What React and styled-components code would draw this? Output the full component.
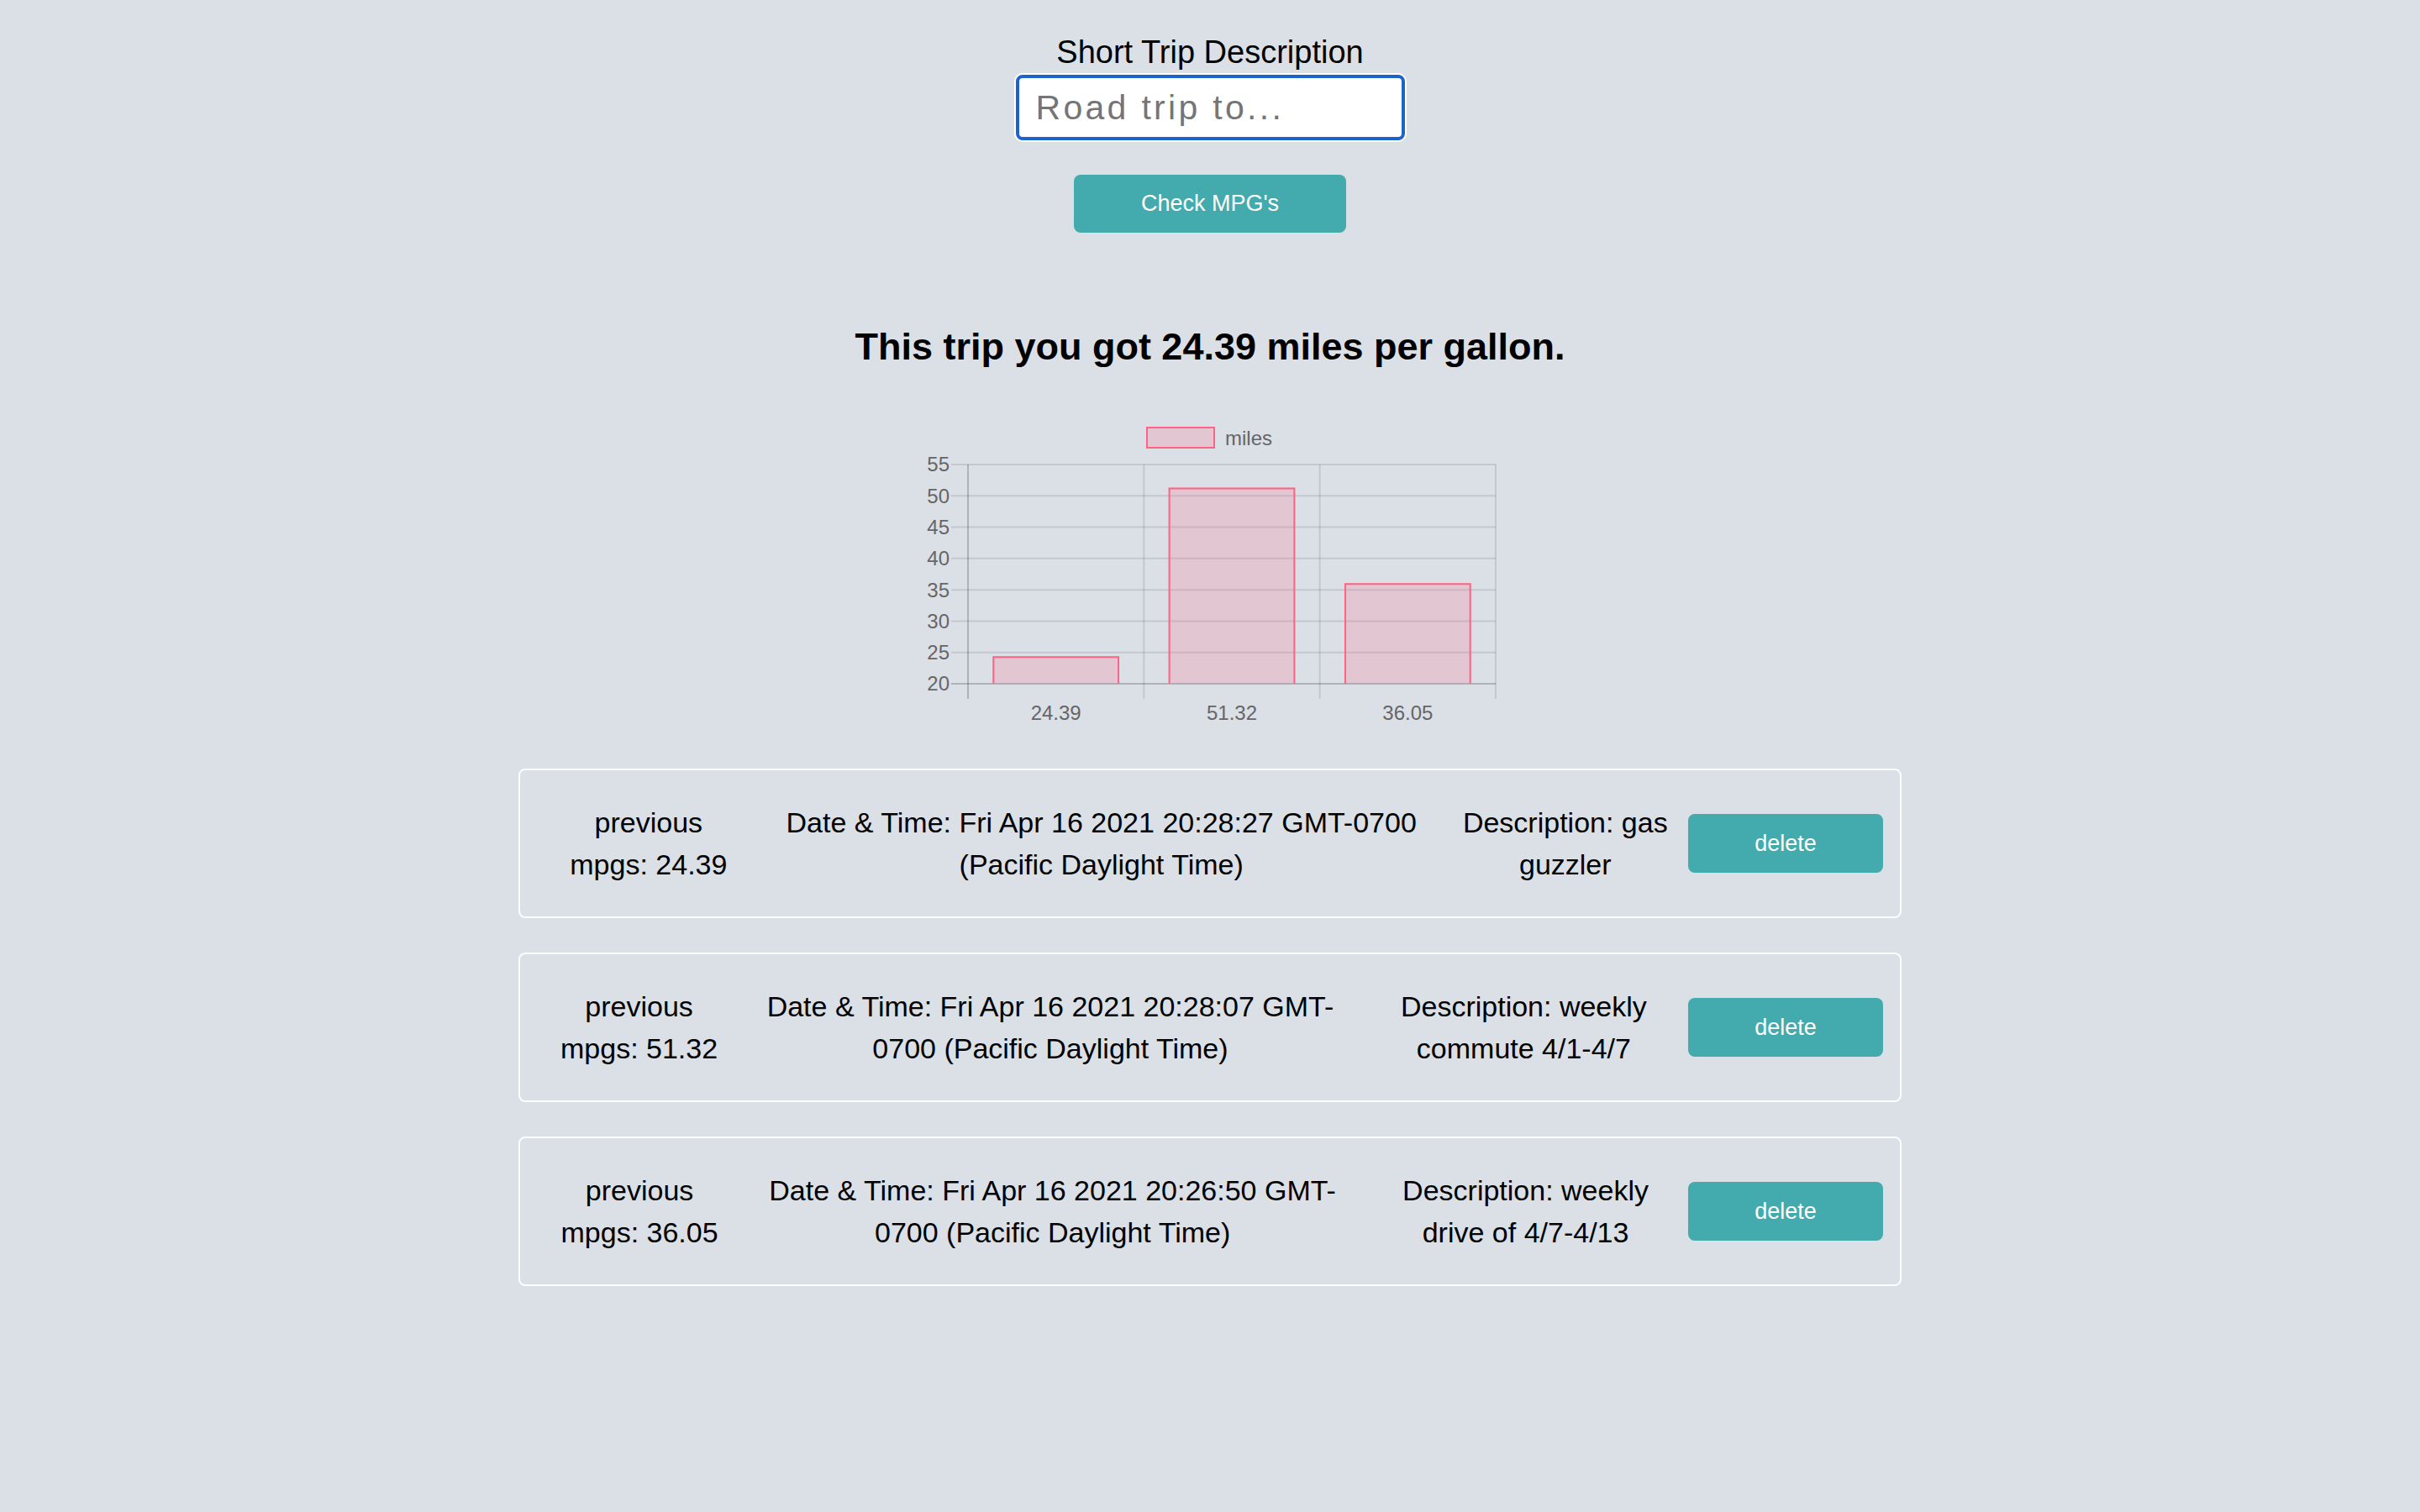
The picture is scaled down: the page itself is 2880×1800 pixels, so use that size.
import React from 'react';
import styled, { createGlobalStyle } from 'styled-components';

const GlobalStyle = createGlobalStyle`
  body {
    margin: 0;
    background: #dbdfe6;
    color: #000;
    font-family: "Liberation Sans", Arial, Helvetica, sans-serif;
  }
`;

const Page = styled.main`
  display: flex;
  flex-direction: column;
  align-items: center;
  min-height: 100vh;
  box-sizing: border-box;
  padding: 40px 0 120px;
`;

const Label = styled.label`
  font-size: 38px;
  line-height: 44px;
`;

const TripInput = styled.input`
  margin-top: 5px;
  width: 463px;
  height: 78px;
  box-sizing: border-box;
  padding: 0 20px;
  border: 4px solid #1a64cc;
  border-radius: 8px;
  box-shadow: 0 0 0 2px #fff;
  outline: none;
  background: #fff;
  font-family: inherit;
  font-size: 41px;
  letter-spacing: 3.3px;

  &::placeholder {
    color: #757575;
  }
`;

const TealButton = styled.button`
  border: none;
  border-radius: 8px;
  background: #43abad;
  color: #fff;
  font-family: inherit;
  font-size: 27px;
  cursor: pointer;
`;

const CheckButton = styled(TealButton)`
  margin-top: 41px;
  width: 324px;
  height: 69px;
`;

const Result = styled.h2`
  margin: 110px 0 0;
  font-size: 45px;
  line-height: 52px;
  font-weight: bold;
`;

const ChartSvg = styled.svg`
  display: block;
  margin-top: 50px;

  text {
    font-family: "Liberation Sans", Arial, Helvetica, sans-serif;
    font-size: 24px;
    fill: #666;
  }
`;

const History = styled.section`
  display: flex;
  flex-direction: column;
  gap: 41px;
  margin-top: 26px;
`;

const Card = styled.div`
  display: flex;
  align-items: center;
  width: 1646px;
  box-sizing: border-box;
  padding: 20px;
  border: 2px solid #fcfdfd;
  border-radius: 8px;
`;

const Cell = styled.div`
  padding: 17px 18px;
  text-align: center;
  font-size: 34px;
  line-height: 50px;
`;

const DeleteButton = styled(TealButton)`
  flex-shrink: 0;
  width: 232px;
  height: 70px;
`;

const trips = [
  { mpg: '24.39', date: 'Fri Apr 16 2021 20:28:27 GMT-0700 (Pacific Daylight Time)', desc: 'gas guzzler' },
  { mpg: '51.32', date: 'Fri Apr 16 2021 20:28:07 GMT-0700 (Pacific Daylight Time)', desc: 'weekly commute 4/1-4/7' },
  { mpg: '36.05', date: 'Fri Apr 16 2021 20:26:50 GMT-0700 (Pacific Daylight Time)', desc: 'weekly drive of 4/7-4/13' },
];

// plot area, in svg units
const plot = { left: 112, right: 740, top: 64, bottom: 325, min: 20, max: 55 };
const pink = 'rgb(255, 99, 132)';
const pinkFill = 'rgba(255, 99, 132, 0.2)';
const grid = 'rgba(0, 0, 0, 0.1)';
const axis = 'rgba(0, 0, 0, 0.2)';

const yOf = (v) => plot.top + ((plot.max - v) / (plot.max - plot.min)) * (plot.bottom - plot.top);

const MilesChart = ({ values }) => {
  const slot = (plot.right - plot.left) / values.length;
  const barW = slot * 0.72;
  const ticks = [55, 50, 45, 40, 35, 30, 25, 20];

  return (
    <ChartSvg width={800} height={400} viewBox="0 0 800 400">
      <rect x={325} y={20} width={80} height={24} fill={pinkFill} stroke={pink} strokeWidth={2} />
      <text x={418} y={41}>miles</text>

      {ticks.map((t) => (
        <g key={t}>
          <line x1={92} x2={plot.right} y1={yOf(t)} y2={yOf(t)} stroke={t === 20 ? axis : grid} strokeWidth={2} />
          <text x={90} y={yOf(t)} dy="0.35em" textAnchor="end">{t}</text>
        </g>
      ))}

      {[0, 1, 2, 3].map((i) => (
        <line
          key={i}
          x1={plot.left + i * slot}
          x2={plot.left + i * slot}
          y1={plot.top}
          y2={343}
          stroke={i === 0 ? axis : grid}
          strokeWidth={2}
        />
      ))}

      {values.map((v, i) => {
        const cx = plot.left + slot * (i + 0.5);
        const x0 = cx - barW / 2;
        const x1 = cx + barW / 2;
        const top = yOf(v);
        return (
          <g key={i}>
            <rect x={x0} y={top} width={barW} height={plot.bottom - top} fill={pinkFill} />
            <path
              d={`M${x0 + 1} ${plot.bottom} V${top + 1} H${x1 - 1} V${plot.bottom}`}
              fill="none"
              stroke={pink}
              strokeWidth={2}
            />
            <text x={cx} y={360} dy="0.35em" textAnchor="middle">{v.toFixed(2)}</text>
          </g>
        );
      })}
    </ChartSvg>
  );
};

const App = () => (
  <>
    <GlobalStyle />
    <Page>
      <Label htmlFor="trip">Short Trip Description</Label>
      <TripInput id="trip" placeholder="Road trip to..." />
      <CheckButton>Check MPG's</CheckButton>

      <Result>This trip you got 24.39 miles per gallon.</Result>

      <MilesChart values={trips.map((t) => parseFloat(t.mpg))} />

      <History>
        {trips.map((t) => (
          <Card key={t.date}>
            <Cell>previous mpgs: {t.mpg}</Cell>
            <Cell>Date &amp; Time: {t.date}</Cell>
            <Cell>Description: {t.desc}</Cell>
            <DeleteButton>delete</DeleteButton>
          </Card>
        ))}
      </History>
    </Page>
  </>
);

export default App;
